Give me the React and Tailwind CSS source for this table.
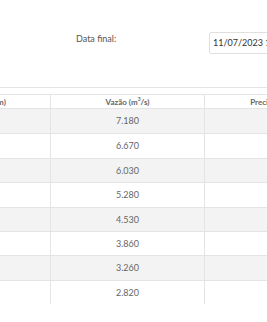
import React from "react";

const rows = [
  { a: "0.95", v: "7.180" },
  { a: "0.90", v: "6.670" },
  { a: "0.85", v: "6.030" },
  { a: "0.80", v: "5.280" },
  { a: "0.75", v: "4.530" },
  { a: "0.70", v: "3.860" },
  { a: "0.65", v: "3.260" },
  { a: "0.60", v: "2.820" },
];

export default function App() {
  return (
    <div className="w-[267px] h-[322px] overflow-hidden bg-white font-['Lato',sans-serif]">
      <div className="h-[88px] border-b border-[#e4e4e4] flex items-start pt-[32px]">
        <div className="w-[76px] shrink-0" />
        <div className="w-[133px] shrink-0 text-[9px] text-[#555] leading-[14px]">Data final:</div>
        <div className="w-[110px] shrink-0 h-[22px] border border-[#e0e0e0] rounded-[2px] flex items-center pl-[3px] text-[9px] text-[#333] whitespace-nowrap">
          11/07/2023 13:00
        </div>
      </div>
      <div className="mt-[6px] ml-[-103px] w-[462px]">
        <div className="flex h-[15px] border-t border-b border-[#e4e4e4] text-[8px] font-bold text-[#666]">
          <div className="w-[154px] flex items-center justify-center border-r border-[#e4e4e4] whitespace-nowrap">Nível dos rios (cm)</div>
          <div className="w-[154px] flex items-center justify-center border-r border-[#e4e4e4]">
            Vazão (m<sup className="text-[5px]">3</sup>/s)
          </div>
          <div className="w-[154px] flex items-center justify-center whitespace-nowrap">Precipitação (mm)</div>
        </div>
        {rows.map((r, i) => (
          <div
            key={i}
            className={
              "flex h-[24.4px] text-[9px] text-[#666] " +
              (i > 0 ? "border-t border-[#e4e4e4] " : "") +
              (i % 2 === 0 ? "bg-[#f3f3f3]" : "bg-white")
            }
          >
            <div className="w-[154px] flex items-center justify-center border-r border-[#e4e4e4]">{r.a}</div>
            <div className="w-[154px] flex items-center justify-center border-r border-[#e4e4e4]">{r.v}</div>
            <div className="w-[154px] flex items-center justify-center"></div>
          </div>
        ))}
      </div>
    </div>
  );
}
